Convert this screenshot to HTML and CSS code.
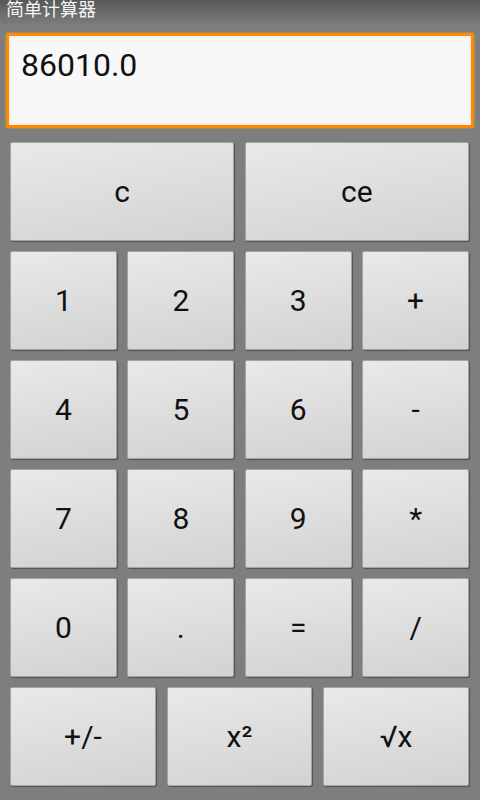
FILE: index.html
```html
<!DOCTYPE html>
<html lang="zh-CN">
<head>
  <meta charset="UTF-8">
  <title>简单计算器</title>
  <link rel="stylesheet" href="styles.css">
</head>
<body>
<div class="app">
  <!-- 标题栏 -->
  <div class="title">简单计算器</div>
  <!-- 显示区 -->
  <div class="screen">86010.0</div>
  <!-- 按键 -->
  <div class="keys">
    <div class="row">
      <button class="key">c</button>
      <button class="key">ce</button>
    </div>
    <div class="row">
      <button class="key">1</button>
      <button class="key">2</button>
      <button class="key">3</button>
      <button class="key">+</button>
    </div>
    <div class="row">
      <button class="key">4</button>
      <button class="key">5</button>
      <button class="key">6</button>
      <button class="key">-</button>
    </div>
    <div class="row">
      <button class="key">7</button>
      <button class="key">8</button>
      <button class="key">9</button>
      <button class="key">*</button>
    </div>
    <div class="row">
      <button class="key">0</button>
      <button class="key">.</button>
      <button class="key">=</button>
      <button class="key">/</button>
    </div>
    <div class="row">
      <button class="key">+/-</button>
      <button class="key">x²</button>
      <button class="key">√x</button>
    </div>
  </div>
</div>
</body>
</html>
```

FILE: styles.css
```css
* {
  padding: 0;
  margin: 0;
  box-sizing: border-box;
}

body {
  width: 480px;
  height: 800px;
  background: #7e7e7e;
  font-family: Roboto, "Noto Sans CJK SC", sans-serif;
  overflow: hidden;
}

.app {
  display: flex;
  flex-direction: column;
  height: 800px;
}

.title {
  height: 26px;
  padding-left: 6px;
  line-height: 20px;
  font-size: 18px;
  color: #f4f4f4;
  background: linear-gradient(#585858, #7e7e7e);
}

.screen {
  height: 95px;
  margin: 7px 6px 0 6px;
  padding: 13px 12px;
  background: #f8f8f8;
  border: 3px solid #ff8a00;
  border-radius: 3px;
  box-shadow: 0 0 2px #ffa030, inset 0 0 4px rgba(0, 0, 0, 0.08);
  font-size: 32px;
  line-height: 32px;
  color: #111;
}

.keys {
  display: flex;
  flex-direction: column;
  gap: 10px;
  margin: 14px 11px 0 10px;
}

.row {
  display: flex;
  gap: 10.6px;
  height: 99px;
}

.key {
  flex: 1;
  border: 1px solid #a4a4a4;
  border-radius: 2px;
  background: linear-gradient(170deg, #e9e9e9, #d2d2d2);
  box-shadow: 1px 1px 1px rgba(0, 0, 0, 0.35);
  font-family: Roboto, "Noto Sans CJK SC", sans-serif;
  font-size: 30px;
  color: #111;
  cursor: pointer;
}
```
